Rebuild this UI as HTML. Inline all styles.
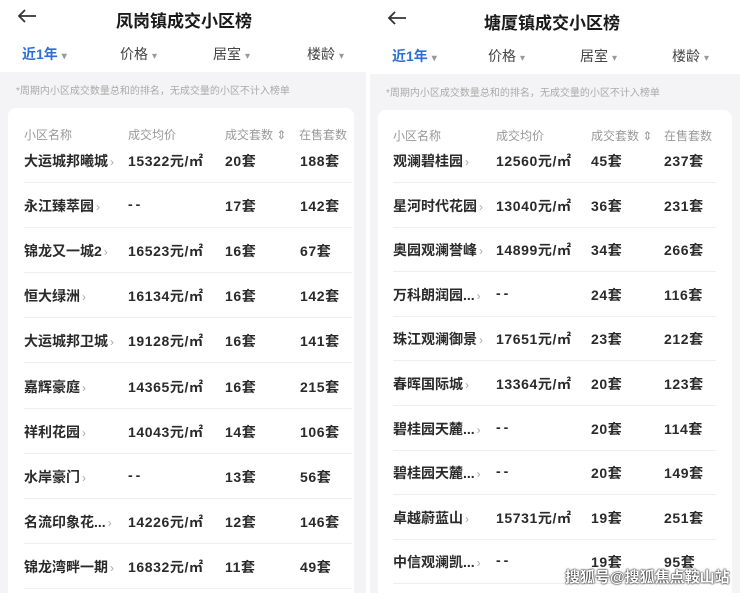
<!DOCTYPE html>
<html><head><meta charset="utf-8"><style>
*{margin:0;padding:0;box-sizing:border-box}
body{width:740px;height:593px;overflow:hidden;background:#fff;position:relative;font-family:"Liberation Sans","Noto Sans CJK SC",sans-serif;color:#222}
.p{position:absolute;top:0;height:593px}
.a{position:absolute;white-space:nowrap}
.gray{position:absolute;background:#f4f4f6}
.card{position:absolute;background:#fff;border-radius:8px}
.title{font-size:17px;font-weight:bold;color:#1a1a1a}
.tab{font-size:14px;color:#444}
.tab.on{color:#2a6fd6;font-weight:bold}
.caret{font-size:10px;color:#999;margin-left:4px}
.note{font-size:10px;color:#aaa}
.h{font-size:12px;color:#999}
.r{font-size:14px;font-weight:600;color:#2a2a2a}
.n{letter-spacing:0.6px}
.d{letter-spacing:3px}
.gt{color:#aaa;font-weight:normal;font-size:12px;margin-left:2px}
.line{position:absolute;height:1px;background:#eee}
</style></head><body>

<div class="p" style="left:0;width:366px">
  <svg class="a" style="left:16px;top:8px" width="22" height="16" viewBox="0 0 22 16"><path d="M20 8H3M9 2L3 8l6 6" fill="none" stroke="#333" stroke-width="1.8"/></svg>
  <div class="a title" style="left:116px;top:7px">凤岗镇成交小区榜</div>
  <div class="a tab on" style="left:22px;top:44px">近1年<span class="caret">▾</span></div>
  <div class="a tab" style="left:120px;top:44px">价格<span class="caret">▾</span></div>
  <div class="a tab" style="left:213px;top:44px">居室<span class="caret">▾</span></div>
  <div class="a tab" style="left:307px;top:44px">楼龄<span class="caret">▾</span></div>
  <div class="gray" style="left:0;top:72px;width:366px;height:521px"></div>
  <div class="a note" style="left:16px;top:82px">*周期内小区成交数量总和的排名，无成交量的小区不计入榜单</div>
  <div class="card" style="left:8px;top:108px;width:346px;height:500px"></div>
  <div class="a h" style="left:24px;top:126px">小区名称</div>
  <div class="a h" style="left:128px;top:126px">成交均价</div>
  <div class="a h" style="left:225px;top:126px">成交套数 ⇕</div>
  <div class="a h" style="left:299px;top:126px">在售套数</div>
</div>

<div class="p" style="left:370px;width:370px">
  <svg class="a" style="left:16px;top:10px" width="22" height="16" viewBox="0 0 22 16"><path d="M20 8H3M9 2L3 8l6 6" fill="none" stroke="#333" stroke-width="1.8"/></svg>
  <div class="a title" style="left:114px;top:9px">塘厦镇成交小区榜</div>
  <div class="a tab on" style="left:22px;top:46px">近1年<span class="caret">▾</span></div>
  <div class="a tab" style="left:118px;top:46px">价格<span class="caret">▾</span></div>
  <div class="a tab" style="left:210px;top:46px">居室<span class="caret">▾</span></div>
  <div class="a tab" style="left:302px;top:46px">楼龄<span class="caret">▾</span></div>
  <div class="gray" style="left:0;top:74px;width:370px;height:519px"></div>
  <div class="a note" style="left:16px;top:84px">*周期内小区成交数量总和的排名，无成交量的小区不计入榜单</div>
  <div class="card" style="left:8px;top:110px;width:354px;height:500px"></div>
  <div class="a h" style="left:23px;top:127px">小区名称</div>
  <div class="a h" style="left:126px;top:127px">成交均价</div>
  <div class="a h" style="left:221px;top:127px">成交套数 ⇕</div>
  <div class="a h" style="left:294px;top:127px">在售套数</div>
</div>

<div id="rows"></div>
<div class="a" style="left:565px;top:566px;font-size:15px;font-weight:bold;color:#fff;text-shadow:0 0 2px #000,0 0 1px #000">搜狐号@搜狐焦点鞍山站</div>

<script>
var L=[["大运城邦曦城","15322元/㎡","20套","188套"],["永江臻萃园","--","17套","142套"],["锦龙又一城2","16523元/㎡","16套","67套"],["恒大绿洲","16134元/㎡","16套","142套"],["大运城邦卫城","19128元/㎡","16套","141套"],["嘉辉豪庭","14365元/㎡","16套","215套"],["祥利花园","14043元/㎡","14套","106套"],["水岸豪门","--","13套","56套"],["名流印象花...","14226元/㎡","12套","146套"],["锦龙湾畔一期","16832元/㎡","11套","49套"]];
var R=[["观澜碧桂园","12560元/㎡","45套","237套"],["星河时代花园","13040元/㎡","36套","231套"],["奥园观澜誉峰","14899元/㎡","34套","266套"],["万科朗润园...","--","24套","116套"],["珠江观澜御景","17651元/㎡","23套","212套"],["春晖国际城","13364元/㎡","20套","123套"],["碧桂园天麓...","--","20套","114套"],["碧桂园天麓...","--","20套","149套"],["卓越蔚蓝山","15731元/㎡","19套","251套"],["中信观澜凯...","--","19套","95套"]];
var h="";
function put(d,xs,y0,p,lx,lw){d.forEach(function(r,i){var y=y0+i*p;
h+='<div class="a r" style="left:'+xs[0]+'px;top:'+y+'px">'+r[0]+'<span class="gt">›</span></div>';
for(var k=1;k<4;k++)h+='<div class="a r '+(r[k]=="--"?"d":"n")+'" style="left:'+xs[k]+'px;top:'+y+'px">'+r[k]+'</div>';
h+='<div class="line" style="left:'+lx+'px;top:'+(y+31)+'px;width:'+lw+'px"></div>';});}
put(L,[24,128,225,300],151,45.1,24,328);
put(R,[393,496,591,664],151,44.6,393,323);
document.getElementById('rows').innerHTML=h;
</script>
</body></html>
